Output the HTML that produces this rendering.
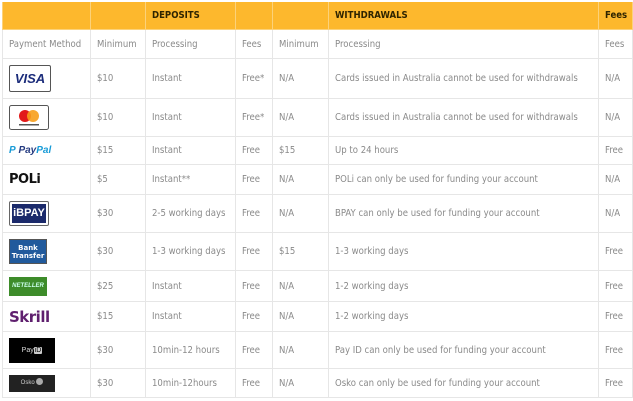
<!DOCTYPE html>
<html><head><style>
body{margin:0;background:#fff;font-family:"DejaVu Sans Condensed","Liberation Sans",sans-serif;}
table{position:absolute;left:2px;top:2px;border-collapse:collapse;table-layout:fixed;width:630px;}
td{border:1px solid #e6e6e6;padding:0 0 0 6px;font-size:9.5px;color:#8a8a8a;white-space:nowrap;overflow:hidden;}
tr.h td{background:#fdb82d;color:#2e2400;font-weight:bold;font-size:9.5px;height:27px;border-color:#fcd27a;border-top:none;}
.logo{display:inline-block;vertical-align:middle}
</style></head><body>
<table>
<colgroup><col style="width:88px"><col style="width:55px"><col style="width:90px"><col style="width:37px"><col style="width:56px"><col style="width:270px"><col style="width:34px"></colgroup>
<tr class="h"><td></td><td></td><td>DEPOSITS</td><td></td><td></td><td>WITHDRAWALS</td><td>Fees</td></tr>
<tr style="height:29px"><td>Payment Method</td><td>Minimum</td><td>Processing</td><td>Fees</td><td>Minimum</td><td>Processing</td><td>Fees</td></tr>
<tr style="height:40px"><td><span class="logo" style="width:40px;height:25px;border:1px solid #555;border-radius:2px;text-align:center;font:italic bold 13px 'Liberation Sans';line-height:25px;color:#1a2b7a">VISA</span></td><td>$10</td><td>Instant</td><td>Free*</td><td>N/A</td><td>Cards issued in Australia cannot be used for withdrawals</td><td>N/A</td></tr>
<tr style="height:38px"><td><svg class="logo" width="40" height="25"><rect x="0.5" y="0.5" width="39" height="24" rx="2" fill="#fff" stroke="#555"/><circle cx="16" cy="11" r="6" fill="#e21a1a"/><circle cx="24" cy="11" r="6" fill="#f79e1b" opacity=".9"/><rect x="10" y="19" width="20" height="1.5" fill="#555"/></svg></td><td>$10</td><td>Instant</td><td>Free*</td><td>N/A</td><td>Cards issued in Australia cannot be used for withdrawals</td><td>N/A</td></tr>
<tr style="height:28px"><td><span style="font:italic bold 10px 'Liberation Sans';color:#253b80"><b style="color:#179bd7">P</b> Pay<span style="color:#179bd7">Pal</span></span></td><td>$15</td><td>Instant</td><td>Free</td><td>$15</td><td>Up to 24 hours</td><td>Free</td></tr>
<tr style="height:30px"><td><span style="font:bold 13px 'DejaVu Sans';color:#111;letter-spacing:-0.5px">POLi</span></td><td>$5</td><td>Instant**</td><td>Free</td><td>N/A</td><td>POLi can only be used for funding your account</td><td>N/A</td></tr>
<tr style="height:38px"><td><span class="logo" style="border:1px solid #666;border-radius:2px;padding:2px;box-sizing:border-box;width:40px;height:25px"><span style="display:block;background:#1b2a6b;color:#fff;font:bold 11px 'Liberation Sans';line-height:19px;text-align:center">iBPAY</span></span></td><td>$30</td><td>2-5 working days</td><td>Free</td><td>N/A</td><td>BPAY can only be used for funding your account</td><td>N/A</td></tr>
<tr style="height:38px"><td><span class="logo" style="width:38px;height:25px;background:#215a9c;border:1px solid #555;color:#fff;font:bold 7px 'DejaVu Sans';line-height:8px;text-align:center;padding-top:4px;box-sizing:border-box">Bank<br>Transfer</span></td><td>$30</td><td>1-3 working days</td><td>Free</td><td>$15</td><td>1-3 working days</td><td>Free</td></tr>
<tr style="height:31px"><td><span class="logo" style="width:38px;height:19px;background:#3d8c2a;color:#cfe;font:italic bold 6px 'Liberation Sans';line-height:19px;text-align:center">NETELLER</span></td><td>$25</td><td>Instant</td><td>Free</td><td>N/A</td><td>1-2 working days</td><td>Free</td></tr>
<tr style="height:30px"><td><span style="font:bold 15px 'DejaVu Sans';color:#5f1f6e;letter-spacing:-0.5px">Skrill</span></td><td>$15</td><td>Instant</td><td>Free</td><td>N/A</td><td>1-2 working days</td><td>Free</td></tr>
<tr style="height:37px"><td><span class="logo" style="width:46px;height:25px;background:#000;color:#ddd;font:7px 'Liberation Sans';line-height:25px;text-align:center">Pay<span style="background:#ccc;color:#000;padding:0 1px;border-radius:1px">iD</span></span></td><td>$30</td><td>10min-12 hours</td><td>Free</td><td>N/A</td><td>Pay ID can only be used for funding your account</td><td>Free</td></tr>
<tr style="height:29px"><td><span class="logo" style="width:46px;height:17px;background:#222;color:#ccc;font:6px 'Liberation Sans';line-height:17px;text-align:center">Osko <span style="display:inline-block;width:7px;height:7px;border-radius:50%;background:#aaa;vertical-align:middle"></span></span></td><td>$30</td><td>10min-12hours</td><td>Free</td><td>N/A</td><td>Osko can only be used for funding your account</td><td>Free</td></tr>
</table>
</body></html>
